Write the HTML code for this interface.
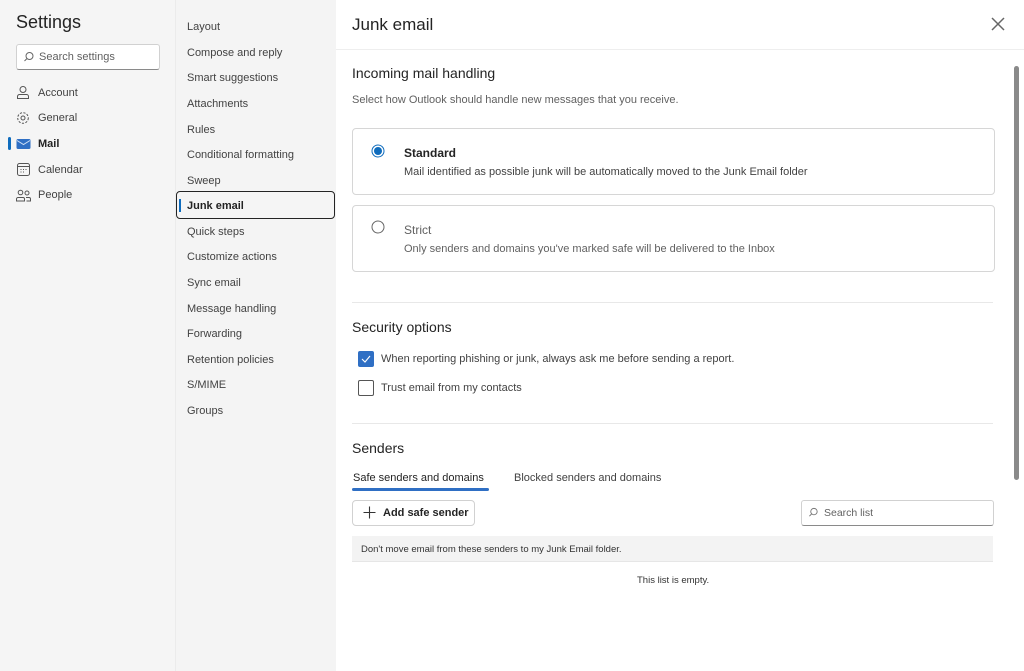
<!DOCTYPE html>
<html><head><meta charset="utf-8"><style>
*{box-sizing:border-box;margin:0;padding:0}
body{width:1024px;height:671px;overflow:hidden;font-family:"Liberation Sans",sans-serif;background:#f5f5f5;color:#242424;position:relative;font-size:11px}
.abs{position:absolute}
.nav1{left:0;top:0;width:175px;height:671px;background:#f5f5f5}
.nav2{left:175px;top:0;width:161px;height:671px;background:#f4f4f4;border-left:1px solid #ebebeb}
.main{left:336px;top:0;width:688px;height:671px;background:#fff}
.it{position:absolute;left:38px;font-size:11px;color:#424242}
.m2{position:absolute;left:187px;font-size:11px;color:#424242}
.card{position:absolute;left:352px;width:643px;border:1px solid #d6d6d6;border-radius:4px;background:#fff}
svg{position:absolute}
</style></head><body>
<div class="abs nav1"></div>
<div class="abs nav2"></div>
<div class="abs" style="left:16px;top:12px;font-size:18px;color:#242424">Settings</div>
<div class="abs" style="left:16px;top:44px;width:144px;height:26px;background:#fff;border:1px solid #d1d1d1;border-bottom-color:#8a8a8a;border-radius:3px"></div>
<svg style="left:23px;top:51px" width="12" height="12" viewBox="0 0 12 12"><circle cx="6.5" cy="5" r="3.5" fill="none" stroke="#666" stroke-width="1"/><path d="M4 7.5L1.5 10" stroke="#666"/></svg>
<div class="abs" style="left:39px;top:51px;font-size:11px;color:#616161">Search settings</div>

<svg style="left:16px;top:85px" width="14" height="15" viewBox="0 0 14 15"><circle cx="7" cy="4.5" r="3" fill="none" stroke="#555"/><path d="M1.5 13.5v-2a2 2 0 0 1 2-2h7a2 2 0 0 1 2 2v2z" fill="none" stroke="#555"/></svg>
<div class="it" style="top:87px">Account</div>
<svg style="left:16px;top:111px" width="14" height="14" viewBox="0 0 14 14"><circle cx="7" cy="7" r="2" fill="none" stroke="#555"/><circle cx="7" cy="7" r="5.3" fill="none" stroke="#555" stroke-dasharray="2.2 1.4"/></svg>
<div class="it" style="top:112px">General</div>
<div class="abs" style="left:8px;top:137px;width:3px;height:13px;background:#0f6cbd;border-radius:2px"></div>
<svg style="left:16px;top:138px" width="15" height="12" viewBox="0 0 15 12"><rect x="0.5" y="1" width="14" height="10" rx="1.5" fill="#2f6fc4"/><path d="M1 2.5l6.5 4 6.5-4" fill="none" stroke="#cfe0f6" stroke-width="1"/></svg>
<div class="it" style="top:138px;font-weight:bold;color:#242424">Mail</div>
<svg style="left:17px;top:163px" width="13" height="13" viewBox="0 0 13 13"><rect x="0.5" y="0.5" width="12" height="12" rx="2" fill="none" stroke="#555"/><path d="M0.5 3.5h12" stroke="#555"/><path d="M3.5 6.5h1M6 6.5h1M8.5 6.5h1M3.5 9h1M6 9h1" stroke="#555"/></svg>
<div class="it" style="top:164px">Calendar</div>
<svg style="left:16px;top:189px" width="15" height="13" viewBox="0 0 15 13"><circle cx="4.5" cy="3.5" r="2.3" fill="none" stroke="#555"/><circle cx="11" cy="4" r="2" fill="none" stroke="#555"/><path d="M0.5 12v-2a1.5 1.5 0 0 1 1.5-1.5h5a1.5 1.5 0 0 1 1.5 1.5v2zM10 8.5h3a1.5 1.5 0 0 1 1.5 1.5v2h-4" fill="none" stroke="#555"/></svg>
<div class="it" style="top:189px">People</div>

<div class="m2" style="top:21px">Layout</div>
<div class="m2" style="top:47px">Compose and reply</div>
<div class="m2" style="top:72px">Smart suggestions</div>
<div class="m2" style="top:98px">Attachments</div>
<div class="m2" style="top:124px">Rules</div>
<div class="m2" style="top:149px">Conditional formatting</div>
<div class="m2" style="top:175px">Sweep</div>
<div class="abs" style="left:176px;top:191px;width:159px;height:28px;border:1.5px solid #242424;border-radius:4px;background:#f5f5f5"></div>
<div class="abs" style="left:179px;top:199px;width:2px;height:13px;background:#0f6cbd"></div>
<div class="m2" style="top:200px;font-weight:bold;color:#242424">Junk email</div>
<div class="m2" style="top:226px">Quick steps</div>
<div class="m2" style="top:251px">Customize actions</div>
<div class="m2" style="top:277px">Sync email</div>
<div class="m2" style="top:303px">Message handling</div>
<div class="m2" style="top:328px">Forwarding</div>
<div class="m2" style="top:354px">Retention policies</div>
<div class="m2" style="top:379px">S/MIME</div>
<div class="m2" style="top:405px">Groups</div>

<div class="abs main"></div>
<div class="abs" style="left:352px;top:15px;font-size:17px">Junk email</div>
<svg style="left:991px;top:17px" width="14" height="14" viewBox="0 0 14 14"><path d="M1 1l12 12M13 1L1 13" stroke="#666" stroke-width="1.5"/></svg>
<div class="abs" style="left:336px;top:49px;width:688px;height:1px;background:#eee"></div>
<div class="abs" style="left:1014px;top:66px;width:5px;height:414px;background:#8a8a8a;border-radius:3px"></div>

<div class="abs" style="left:352px;top:65px;font-size:14px">Incoming mail handling</div>
<div class="abs" style="left:352px;top:94px;font-size:11px;color:#616161">Select how Outlook should handle new messages that you receive.</div>
<div class="card" style="top:128px;height:67px"></div>
<svg style="left:371px;top:144px" width="14" height="14" viewBox="0 0 14 14"><circle cx="7" cy="7" r="6" fill="none" stroke="#0f6cbd"/><circle cx="7" cy="7" r="4" fill="#0f6cbd"/></svg>
<div class="abs" style="left:404px;top:146px;font-size:12px;font-weight:bold">Standard</div>
<div class="abs" style="left:404px;top:166px;font-size:11px;color:#424242">Mail identified as possible junk will be automatically moved to the Junk Email folder</div>
<div class="card" style="top:205px;height:67px"></div>
<svg style="left:371px;top:220px" width="14" height="14" viewBox="0 0 14 14"><circle cx="7" cy="7" r="6" fill="none" stroke="#666"/></svg>
<div class="abs" style="left:404px;top:223px;font-size:12px;color:#616161">Strict</div>
<div class="abs" style="left:404px;top:243px;font-size:11px;color:#616161">Only senders and domains you've marked safe will be delivered to the Inbox</div>
<div class="abs" style="left:352px;top:302px;width:641px;height:1px;background:#e8e8e8"></div>
<div class="abs" style="left:352px;top:319px;font-size:14px">Security options</div>
<svg style="left:358px;top:351px" width="16" height="16" viewBox="0 0 16 16"><rect x="0" y="0" width="16" height="16" rx="2" fill="#2f6fc4"/><path d="M4 8l3 3 5-6" fill="none" stroke="#fff" stroke-width="1.1"/></svg>
<div class="abs" style="left:381px;top:353px;font-size:11px;color:#424242">When reporting phishing or junk, always ask me before sending a report.</div>
<div class="abs" style="left:358px;top:380px;width:16px;height:16px;border:1px solid #555;border-radius:2px"></div>
<div class="abs" style="left:381px;top:382px;font-size:11px;color:#424242">Trust email from my contacts</div>
<div class="abs" style="left:352px;top:423px;width:641px;height:1px;background:#e8e8e8"></div>
<div class="abs" style="left:352px;top:440px;font-size:14px">Senders</div>
<div class="abs" style="left:353px;top:472px;font-size:11px;color:#242424">Safe senders and domains</div>
<div class="abs" style="left:352px;top:488px;width:137px;height:3px;background:#2f6fc4;border-radius:2px"></div>
<div class="abs" style="left:514px;top:472px;font-size:11px;color:#424242">Blocked senders and domains</div>
<div class="abs" style="left:352px;top:500px;width:123px;height:26px;border:1px solid #d1d1d1;border-radius:4px"></div>
<svg style="left:363px;top:506px" width="13" height="13" viewBox="0 0 13 13"><path d="M6.5 0.5v12M0.5 6.5h12" stroke="#333" stroke-width="1.1"/></svg>
<div class="abs" style="left:383px;top:507px;font-size:11px;font-weight:bold">Add safe sender</div>
<div class="abs" style="left:801px;top:500px;width:193px;height:26px;border:1px solid #d1d1d1;border-bottom-color:#8a8a8a;border-radius:3px"></div>
<svg style="left:808px;top:507px" width="11" height="11" viewBox="0 0 12 12"><circle cx="6.5" cy="5" r="3.5" fill="none" stroke="#777"/><path d="M4 7.5L1.5 10" stroke="#777"/></svg>
<div class="abs" style="left:824px;top:507px;font-size:10.5px;color:#616161">Search list</div>
<div class="abs" style="left:352px;top:536px;width:641px;height:26px;background:#f3f3f3;border-bottom:1px solid #e6e6e6"></div>
<div class="abs" style="left:361px;top:544px;font-size:9.5px;color:#333">Don't move email from these senders to my Junk Email folder.</div>
<div class="abs" style="left:637px;top:575px;font-size:9.5px;color:#333">This list is empty.</div>
</body></html>
